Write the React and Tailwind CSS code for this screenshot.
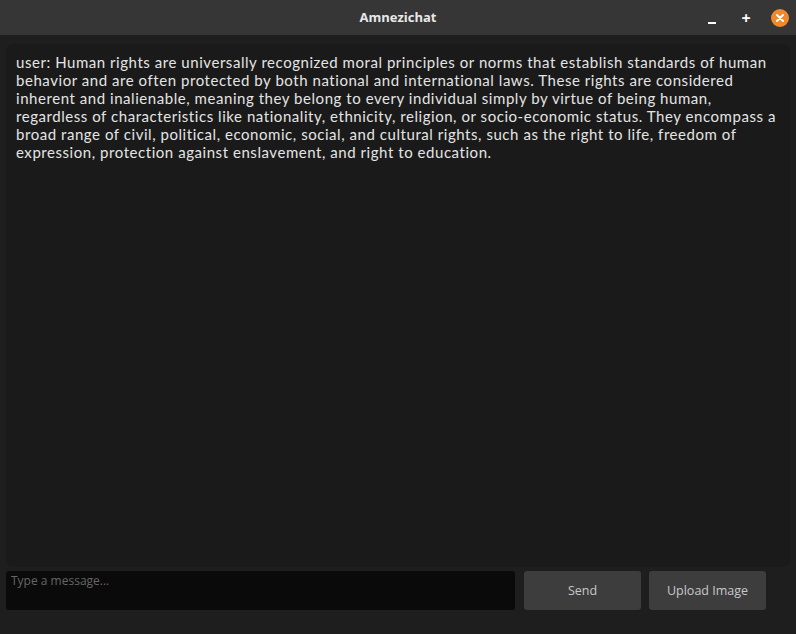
import React from 'react';

// 按参考图的换行位置逐行输出
const lines = [
  'user: Human rights are universally recognized moral principles or norms that establish standards of human',
  'behavior and are often protected by both national and international laws. These rights are considered',
  'inherent and inalienable, meaning they belong to every individual simply by virtue of being human,',
  'regardless of characteristics like nationality, ethnicity, religion, or socio-economic status. They encompass a',
  'broad range of civil, political, economic, social, and cultural rights, such as the right to life, freedom of',
  'expression, protection against enslavement, and right to education.',
];

const App = () => {
  return (
    <div
      className="w-[796px] h-[634px] flex flex-col bg-[#1e1e1e] overflow-hidden"
      style={{ fontFamily: '"Open Sans", "Noto Sans", sans-serif' }}
    >
      {/* 标题栏 */}
      <div className="h-[35px] bg-[#363636] relative flex items-center justify-center shrink-0">
        <span className="text-[13px] font-bold text-[#e8e8e8]">Amnezichat</span>
        <div className="absolute right-[7px] top-0 h-full flex items-center gap-[16px]">
          <div className="w-[18px] h-[18px] flex items-end justify-center pb-[3px]">
            <div className="w-[8px] h-[2px] bg-white" />
          </div>
          <div className="w-[18px] h-[18px] flex items-center justify-center text-white text-[16px] font-bold leading-none">
            +
          </div>
          <div className="w-[18px] h-[18px] rounded-full bg-[#f0892b] flex items-center justify-center">
            <svg width="10" height="10" viewBox="0 0 10 10">
              <path d="M2 2 L8 8 M8 2 L2 8" stroke="white" strokeWidth="2" strokeLinecap="round" />
            </svg>
          </div>
        </div>
      </div>

      {/* 消息区 */}
      <div className="flex-1 flex flex-col px-[6px] pt-[9px] pb-[24px] gap-[4px] min-h-0">
        <div className="flex-1 bg-[#1a1a1a] rounded-[8px] px-[10px] pt-[9px] min-h-0">
          <div
            className="text-[15px] leading-[18px] tracking-[0.55px] text-[#e4e4e4] whitespace-nowrap"
            style={{ fontFamily: 'Lato, "Open Sans", sans-serif' }}
          >
            {lines.map((line, i) => (
              <div key={i}>{line}</div>
            ))}
          </div>
        </div>

        {/* 输入区 */}
        <div className="h-[39px] flex items-stretch gap-[8px] shrink-0">
          <div className="w-[509px] bg-[#0a0a0a] rounded-[3px] px-[5px] pt-[3px] flex items-start">
            <span className="text-[12px] leading-[14px] text-[#666666]">Type a message...</span>
          </div>
          <button className="w-[117px] ml-[1px] pt-[2px] bg-[#3d3d3d] rounded-[3px] text-[12.5px] text-[#c8c8c8]">
            Send
          </button>
          <button className="w-[117px] pt-[2px] bg-[#3d3d3d] rounded-[3px] text-[12.5px] text-[#c8c8c8]">
            Upload Image
          </button>
        </div>
      </div>
    </div>
  );
};

export default App;
